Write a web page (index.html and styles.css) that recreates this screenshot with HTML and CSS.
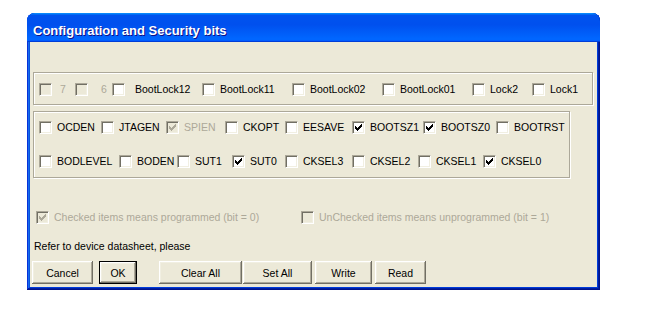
FILE: index.html
```html
<!DOCTYPE html>
<html lang="en">
<head>
  <meta charset="UTF-8">
  <title>Configuration and Security bits</title>
  <link rel="stylesheet" href="styles.css">
</head>
<body>

  <div class="window">
    <div class="titlebar">Configuration and Security bits</div>

    <div class="client">
      <div class="group group-lock">
        <div class="row row-lock">
          <label class="check disabled gap-7"><span class="box"></span><span class="text">7</span></label>
          <label class="check disabled gap-6"><span class="box"></span><span class="text">6</span></label>
          <label class="check gap-bl12"><span class="box"></span><span class="text">BootLock12</span></label>
          <label class="check"><span class="box"></span><span class="text">BootLock11</span></label>
          <label class="check"><span class="box"></span><span class="text">BootLock02</span></label>
          <label class="check"><span class="box"></span><span class="text">BootLock01</span></label>
          <label class="check"><span class="box"></span><span class="text">Lock2</span></label>
          <label class="check"><span class="box"></span><span class="text">Lock1</span></label>
        </div>
      </div>

      <div class="group group-fuse">
        <div class="row row-high">
          <label class="check"><span class="box"></span><span class="text">OCDEN</span></label>
          <label class="check"><span class="box"></span><span class="text">JTAGEN</span></label>
          <label class="check disabled"><span class="box"><svg width="7" height="7" viewBox="0 0 7 7"><path d="M6 0h1v1h-1zM5 1h2v1h-2zM0 2h1v1h-1zM4 2h3v1h-3zM0 3h2v1h-2zM3 3h3v1h-3zM0 4h5v1h-5zM1 5h3v1h-3zM2 6h1v1h-1z"/></svg></span><span class="text">SPIEN</span></label>
          <label class="check"><span class="box"></span><span class="text">CKOPT</span></label>
          <label class="check"><span class="box"></span><span class="text">EESAVE</span></label>
          <label class="check"><span class="box"><svg width="7" height="7" viewBox="0 0 7 7"><path d="M6 0h1v1h-1zM5 1h2v1h-2zM0 2h1v1h-1zM4 2h3v1h-3zM0 3h2v1h-2zM3 3h3v1h-3zM0 4h5v1h-5zM1 5h3v1h-3zM2 6h1v1h-1z"/></svg></span><span class="text">BOOTSZ1</span></label>
          <label class="check"><span class="box"><svg width="7" height="7" viewBox="0 0 7 7"><path d="M6 0h1v1h-1zM5 1h2v1h-2zM0 2h1v1h-1zM4 2h3v1h-3zM0 3h2v1h-2zM3 3h3v1h-3zM0 4h5v1h-5zM1 5h3v1h-3zM2 6h1v1h-1z"/></svg></span><span class="text">BOOTSZ0</span></label>
          <label class="check"><span class="box"></span><span class="text">BOOTRST</span></label>
        </div>
        <div class="row row-low">
          <label class="check"><span class="box"></span><span class="text">BODLEVEL</span></label>
          <label class="check"><span class="box"></span><span class="text">BODEN</span></label>
          <label class="check"><span class="box"></span><span class="text">SUT1</span></label>
          <label class="check"><span class="box"><svg width="7" height="7" viewBox="0 0 7 7"><path d="M6 0h1v1h-1zM5 1h2v1h-2zM0 2h1v1h-1zM4 2h3v1h-3zM0 3h2v1h-2zM3 3h3v1h-3zM0 4h5v1h-5zM1 5h3v1h-3zM2 6h1v1h-1z"/></svg></span><span class="text">SUT0</span></label>
          <label class="check"><span class="box"></span><span class="text">CKSEL3</span></label>
          <label class="check"><span class="box"></span><span class="text">CKSEL2</span></label>
          <label class="check"><span class="box"></span><span class="text">CKSEL1</span></label>
          <label class="check"><span class="box"><svg width="7" height="7" viewBox="0 0 7 7"><path d="M6 0h1v1h-1zM5 1h2v1h-2zM0 2h1v1h-1zM4 2h3v1h-3zM0 3h2v1h-2zM3 3h3v1h-3zM0 4h5v1h-5zM1 5h3v1h-3zM2 6h1v1h-1z"/></svg></span><span class="text">CKSEL0</span></label>
        </div>
      </div>

      <div class="row legend">
        <label class="check disabled"><span class="box"><svg width="7" height="7" viewBox="0 0 7 7"><path d="M6 0h1v1h-1zM5 1h2v1h-2zM0 2h1v1h-1zM4 2h3v1h-3zM0 3h2v1h-2zM3 3h3v1h-3zM0 4h5v1h-5zM1 5h3v1h-3zM2 6h1v1h-1z"/></svg></span><span class="text">Checked items means programmed (bit = 0)</span></label>
        <label class="check disabled"><span class="box"></span><span class="text">UnChecked items means unprogrammed (bit = 1)</span></label>
      </div>

      <p class="hint">Refer to device datasheet, please</p>

      <div class="buttons">
        <button class="btn btn-cancel">Cancel</button>
        <button class="btn btn-ok default">OK</button>
        <button class="btn btn-clear">Clear All</button>
        <button class="btn btn-set">Set All</button>
        <button class="btn btn-write">Write</button>
        <button class="btn btn-read">Read</button>
      </div>
    </div>
  </div>

</body>
</html>
```

FILE: styles.css
```css
body {
  margin: 0;
  background: #fff;
  font-family: "Liberation Sans", Arial, sans-serif;
  font-size: 10.5px;
  color: #000;
}

.window {
  width: 573px;
  height: 277px;
  margin: 13px 0 0 27px;
  box-sizing: border-box;
  padding: 0 3px 3px;
  display: flex;
  flex-direction: column;
  background: #0831d9;
  border-radius: 8px 8px 0 0;
  box-shadow: inset -1px -1px #00138c, inset 1px 1px #0831d9,
              inset -2px -2px #001ea0, inset 2px 2px #166aee,
              inset -3px -3px #003bda, inset 3px 3px #0855dd;
}

.titlebar {
  height: 29px;
  margin: 0 -3px;
  box-sizing: border-box;
  padding: 6px 0 0 6px;
  border-radius: 8px 8px 0 0;
  background: linear-gradient(180deg, #0997ff, #0053ee 8%, #0050ee 40%, #06f 88%, #06f 93%, #005bff 95%, #003dd7 96%, #003dd7);
  color: #fff;
  font-size: 13px;
  font-weight: bold;
  line-height: 23px;
  text-shadow: 1px 1px #0f1089;
  white-space: nowrap;
}

.client {
  flex: 1;
  display: flex;
  flex-direction: column;
  align-items: flex-start;
  padding-top: 30px;
  background: #ece9d8;
}

/* etched group frames */
.group {
  box-sizing: border-box;
  margin-left: 3px;
  padding-left: 5px;
  border: 1px solid #aca899;
  box-shadow: inset 1px 1px #fff, 1px 1px #fff;
}

.group-lock {
  width: 560px;
  height: 33px;
  padding-top: 10px;
}

.group-fuse {
  width: 537px;
  height: 67px;
  margin-top: 6px;
  padding-top: 9px;
  display: flex;
  flex-direction: column;
  gap: 21px;
}

.row {
  display: grid;
  height: 13px;
  align-items: center;
}

.row-lock { grid-template-columns: 36px 37px 90px 90px 90px 90px 60px auto; }
.row-high { grid-template-columns: 62px 65px 59px 60px 67px 71px 73px auto; }
.row-low  { grid-template-columns: 80px 58px 55px 53px 67px 66px 65px auto; }

.check {
  display: flex;
  align-items: center;
  white-space: nowrap;
  min-width: 0;
}

.box {
  flex: none;
  width: 13px;
  height: 13px;
  box-sizing: border-box;
  padding: 2px;
  border: 1px solid;
  border-color: #aca899 #fff #fff #aca899;
  box-shadow: inset 1px 1px #716f64, inset -1px -1px #f1efe2;
  background: #fff;
}

.box svg {
  display: block;
  fill: #000;
}

.check .text {
  padding-left: 5px;
  line-height: 13px;
}

.gap-7 .text { padding-left: 8px; }
.gap-6 .text { padding-left: 13px; }
.gap-bl12 .text { padding-left: 10px; }

.check.disabled { color: #aca899; }
.check.disabled .box { background: #ece9d8; }
.check.disabled svg { fill: #aca899; }

.legend {
  margin: 33px 0 0 6px;
  grid-template-columns: 265px auto;
}

.hint {
  margin: 16px 0 0 4px;
  line-height: 13px;
}

.buttons {
  display: flex;
  margin: 8px 0 0 2px;
}

.btn {
  height: 23px;
  box-sizing: border-box;
  padding: 0;
  border: none;
  background: #ece9d8;
  font: inherit;
  color: #000;
  box-shadow: inset -1px -1px #716f64, inset 1px 1px #fff,
              inset -2px -2px #aca899, inset 2px 2px #f1efe2;
}

.btn.default { border: 1px solid #000; }

.btn-cancel { width: 61px; }
.btn-ok { width: 38px; margin-left: 6px; }
.btn-clear { width: 83px; margin-left: 22px; }
.btn-set { width: 69px; margin-left: 1px; }
.btn-write { width: 57px; margin-left: 3px; }
.btn-read { width: 51px; margin-left: 3px; }
```
